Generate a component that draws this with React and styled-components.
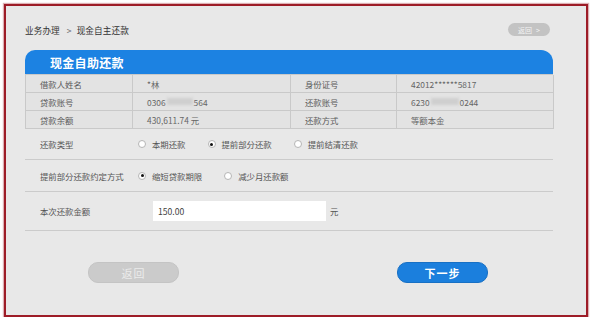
import React from 'react';
import styled, { createGlobalStyle } from 'styled-components';

const GlobalStyle = createGlobalStyle`
  html, body {
    margin: 0;
    padding: 0;
    background: #ffffff;
  }
  body {
    font-family: "Noto Sans CJK SC", "Noto Sans", sans-serif;
    color: #444;
  }
`;

const Frame = styled.div`
  box-sizing: border-box;
  margin: 4px 0 0 4px;
  width: 584px;
  height: 313px;
  border: 2px solid #9d1c27;
  box-shadow: 0 0 1px 1px rgba(157, 28, 39, 0.35);
  background: #e8e8e8;
  padding: 17px 33px 0 19px;
`;

const TopBar = styled.div`
  display: flex;
  align-items: center;
  justify-content: space-between;
  height: 13px;
`;

const Crumb = styled.div`
  font-size: 8.6px;
  color: #333;
  letter-spacing: 0.1px;
  span {
    margin: 0 5px 0 7px;
    color: #666;
  }
`;

const BackPill = styled.div`
  width: 42px;
  height: 13px;
  margin-right: 3px;
  border-radius: 7px;
  background: #c3c3c3;
  color: #f4f4f4;
  font-size: 7px;
  display: flex;
  align-items: center;
  justify-content: center;
  gap: 4px;
`;

const Panel = styled.div`
  margin-top: 14px;
  width: 528px;
`;

const PanelHead = styled.div`
  height: 24px;
  background: #1c82e2;
  border-radius: 10px 12px 0 0;
  display: flex;
  align-items: center;
  padding-left: 25px;
  color: #fff;
  font-size: 12px;
  font-weight: 700;
  letter-spacing: 0.3px;
`;

const InfoTable = styled.div`
  display: grid;
  grid-template-columns: 107px 158px 106px 157px;
  border-left: 1px solid #c9c9c9;
  border-top: 1px solid #c9c9c9;
`;

const Cell = styled.div`
  box-sizing: border-box;
  height: 18px;
  display: flex;
  align-items: center;
  padding-left: ${p => (p.$label ? 14 : 14)}px;
  border-right: 1px solid #c9c9c9;
  border-bottom: 1px solid #c9c9c9;
  background: #e3e3e3;
  font-size: 8.4px;
  color: ${p => (p.$label ? '#5a5a5a' : '#666')};
`;

const Blur = styled.span`
  display: inline-block;
  width: ${p => p.$w}px;
  height: 7px;
  margin: 0 1px;
  background: #cfcfcf;
  filter: blur(1.5px);
`;

const FormRow = styled.div`
  box-sizing: border-box;
  height: ${p => p.$h}px;
  display: flex;
  align-items: center;
  border-bottom: 1px solid #cbcbcb;
  padding-left: 15px;
`;

const RowLabel = styled.div`
  width: 98px;
  font-size: 8.4px;
  color: #555;
  white-space: nowrap;
`;

const Options = styled.div`
  display: flex;
  align-items: center;
  gap: 22px;
`;

const Option = styled.label`
  display: flex;
  align-items: center;
  gap: 6px;
  font-size: 8.4px;
  color: #555;
`;

const Dot = styled.span`
  box-sizing: border-box;
  width: 8px;
  height: 8px;
  border-radius: 50%;
  border: 1px solid #b5b5b5;
  background: #fff;
  display: flex;
  align-items: center;
  justify-content: center;
  &::after {
    content: '';
    width: 3px;
    height: 3px;
    border-radius: 50%;
    background: ${p => (p.$on ? '#111' : 'transparent')};
  }
`;

const Amount = styled.div`
  box-sizing: border-box;
  margin-left: 15px;
  width: 173px;
  height: 20px;
  background: #fff;
  display: flex;
  align-items: center;
  padding-left: 5px;
  font-size: 8.6px;
  color: #444;
`;

const Unit = styled.span`
  margin-left: 4px;
  font-size: 8.4px;
  color: #555;
`;

const Actions = styled.div`
  display: flex;
  justify-content: space-between;
  padding: 31px 65px 0 63px;
`;

const Button = styled.div`
  box-sizing: border-box;
  width: 91px;
  height: 21px;
  border-radius: 10px;
  display: flex;
  align-items: center;
  justify-content: center;
  font-size: 11px;
  font-weight: ${p => (p.$primary ? 700 : 400)};
  letter-spacing: 1px;
  background: ${p => (p.$primary ? '#1b7fdd' : '#cbcbcb')};
  border: 1px solid ${p => (p.$primary ? '#1870c4' : '#c4c4c4')};
  color: ${p => (p.$primary ? '#fff' : '#ececec')};
`;

const Radio = ({ on, children }) => (
  <Option>
    <Dot $on={on} />
    {children}
  </Option>
);

export default function App() {
  return (
    <>
      <GlobalStyle />
      <Frame>
        <TopBar>
          <Crumb>
            业务办理<span>&gt;</span>现金自主还款
          </Crumb>
          <BackPill>
            返回<span>&gt;</span>
          </BackPill>
        </TopBar>

        <Panel>
          <PanelHead>现金自助还款</PanelHead>
          <InfoTable>
            <Cell $label>借款人姓名</Cell>
            <Cell>*林</Cell>
            <Cell $label>身份证号</Cell>
            <Cell>42012******5817</Cell>

            <Cell $label>贷款账号</Cell>
            <Cell>
              0306<Blur $w={26} />564
            </Cell>
            <Cell $label>还款账号</Cell>
            <Cell>
              6230<Blur $w={28} />0244
            </Cell>

            <Cell $label>贷款余额</Cell>
            <Cell>430,611.74 元</Cell>
            <Cell $label>还款方式</Cell>
            <Cell>等额本金</Cell>
          </InfoTable>

          <FormRow $h={31}>
            <RowLabel>还款类型</RowLabel>
            <Options>
              <Radio>本期还款</Radio>
              <Radio on>提前部分还款</Radio>
              <Radio>提前结清还款</Radio>
            </Options>
          </FormRow>

          <FormRow $h={32}>
            <RowLabel>提前部分还款约定方式</RowLabel>
            <Options>
              <Radio on>缩短贷款期限</Radio>
              <Radio>减少月还款额</Radio>
            </Options>
          </FormRow>

          <FormRow $h={39}>
            <RowLabel>本次还款金额</RowLabel>
            <Amount>150.00</Amount>
            <Unit>元</Unit>
          </FormRow>

          <Actions>
            <Button>返回</Button>
            <Button $primary>下一步</Button>
          </Actions>
        </Panel>
      </Frame>
    </>
  );
}
